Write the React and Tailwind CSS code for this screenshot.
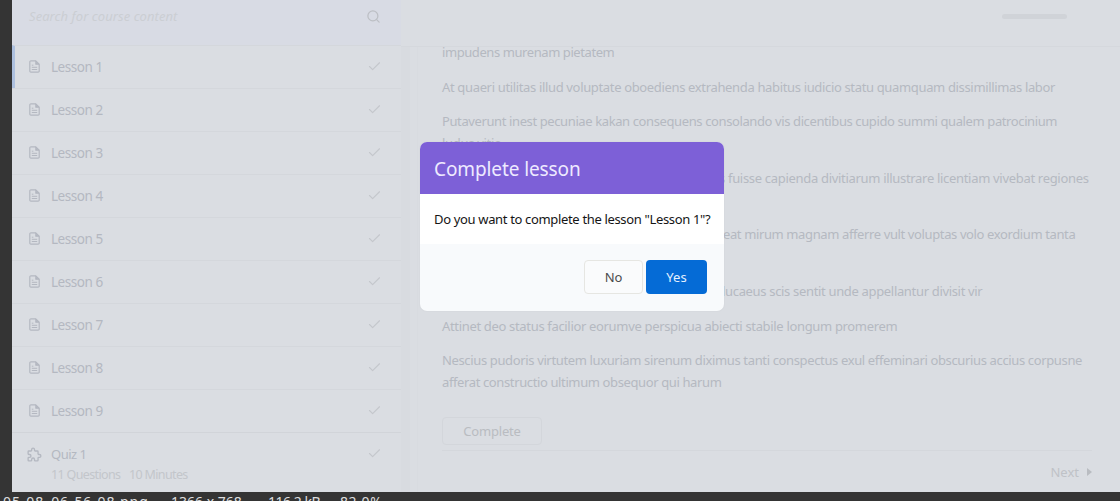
import React from "react";
import { Search, Check } from "lucide-react";

const lessons = [1, 2, 3, 4, 5, 6, 7, 8, 9];

const paragraphs = [
  [{ t: "impudens murenam pietatem", c: "tracking-[-0.42px]" }],
  [{ t: "At quaeri utilitas illud voluptate oboediens extrahenda habitus iudicio statu quamquam dissimillimas labor", c: "tracking-[-0.345px]" }],
  [
    { t: "Putaverunt inest pecuniae kakan consequens consolando vis dicentibus cupido summi qualem patrocinium", c: "tracking-[-0.39px]" },
    { t: "ludus vitio", c: "tracking-[-0.3px]" },
  ],
  [{ t: "s fuisse capienda divitiarum illustrare licentiam vivebat regiones", c: "tracking-[-0.31px] pl-[277px]" }, { t: "\u00a0", c: "" }],
  [{ t: "eat mirum magnam afferre vult voluptas volo exordium tanta", c: "tracking-[-0.38px] pl-[281px]" }, { t: "\u00a0", c: "" }],
  [{ t: "lucaeus scis sentit unde appellantur divisit vir", c: "tracking-[-0.33px] pl-[280px]" }],
  [{ t: "Attinet deo status facilior eorumve perspicua abiecti stabile longum promerem", c: "tracking-[-0.33px]" }],
  [
    { t: "Nescius pudoris virtutem luxuriam sirenum diximus tanti conspectus exul effeminari obscurius accius corpusne", c: "tracking-[-0.36px]" },
    { t: "afferat constructio ultimum obsequor qui harum", c: "tracking-[-0.38px]" },
  ],
];

function LessonIcon() {
  return (
    <svg className="h-[13px] w-[11px] text-[#b4b8c1]" viewBox="0 0 11 13" fill="none" stroke="currentColor" strokeLinejoin="round">
      <path d="M2 .8h4.8l3.4 3.4v6.9a1.1 1.1 0 0 1-1.1 1.1H2A1.1 1.1 0 0 1 .8 11.100V1.900A1.100 1.100 0 0 1 2 .8Z" strokeWidth="1.2" />
      <path d="M6.600 1v3.400h3.400Z" fill="currentColor" strokeWidth=".7" />
      <path d="M2.800 5.200h1.600M2.800 7.300h5.400M2.800 9.500h5.400" strokeWidth="1" />
    </svg>
  );
}

function QuizIcon() {
  return (
    <svg className="ml-[-1px] mt-[2px] size-[17px] text-[#b4b8c1]" viewBox="0 0 24 24" fill="none" stroke="currentColor" strokeWidth="1.9" strokeLinejoin="round">
      <path d="M4 7h3a1 1 0 0 0 1-1V5a2 2 0 0 1 4 0v1a1 1 0 0 0 1 1h3a1 1 0 0 1 1 1v3a1 1 0 0 0 1 1h1a2 2 0 0 1 0 4h-1a1 1 0 0 0-1 1v3a1 1 0 0 1-1 1h-3a1 1 0 0 1-1-1v-1a2 2 0 0 0-4 0v1a1 1 0 0 1-1 1H4a1 1 0 0 1-1-1v-3a1 1 0 0 1 1-1h1a2 2 0 0 0 0-4H4a1 1 0 0 1-1-1V8a1 1 0 0 1 1-1" />
    </svg>
  );
}

function Sidebar() {
  return (
    <aside className="flex w-[389px] shrink-0 flex-col">
      <div className="flex h-[45px] shrink-0 items-start justify-between bg-[#d8dbe4] pl-[17px] pr-[20px] pt-[6px]">
        <span className="text-[13px] italic leading-[20px] tracking-[0.06px] text-[#cbced3]">Search for course content</span>
        <Search className="mt-[3px] size-[15px] text-[#bcbfc4]" strokeWidth={2} />
      </div>
      {lessons.map((n) => (
        <div
          key={n}
          className={
            "flex h-[43px] shrink-0 items-center border-t border-[#d4d7dc] pb-[1px] pr-[19px] " +
            (n === 1 ? "border-l-[3px] border-l-[#adc0df] pl-[14px]" : "pl-[17px]")
          }
        >
          <LessonIcon />
          <span className="ml-[11px] flex-1 text-[13.500px] leading-[20px] tracking-[-0.6px] text-[#b4b8c1]"><span className="tracking-[-0.45px]">Lesson {n}</span></span>
          <Check className="size-[15px] text-[#c4c7cc]" strokeWidth={1.8} />
        </div>
      ))}
      <div className="flex flex-1 items-start border-t border-[#d1d4d9] pl-[15px] pr-[19px] pt-[11px]">
        <QuizIcon />
        <div className="ml-[8px] flex-1 text-[13px] leading-[20px]">
          <div className="tracking-[-0.5px] text-[#b4b8c1]">Quiz 1</div>
          <div className="mt-px flex gap-[11px] text-[12.5px] tracking-[-0.65px] text-[#c3c6cb]">
            <span className="w-[67px] whitespace-nowrap">11 Questions</span>
            <span className="whitespace-nowrap">10 Minutes</span>
          </div>
        </div>
        <Check className="mt-[2px] size-[15px] text-[#c4c7cc]" strokeWidth={1.8} />
      </div>
    </aside>
  );
}

function Content() {
  return (
    <main className="flex min-w-0 flex-1 flex-col">
      <header className="flex h-[47px] shrink-0 justify-end border-b border-[#d5d8dd] pr-[53px] pt-[14px]">
        <div className="h-[5px] w-[65px] rounded-full bg-[#d0d3d8]" />
      </header>
      <div className="flex min-h-0 flex-1">
        <div className="w-[8px] shrink-0 bg-[#d8dbe0]" />
        <div className="w-[9px] shrink-0 border-x border-[#d8dbe0]" />
        <div className="flex flex-1 flex-col overflow-hidden pl-[24px] pr-[28px]">
          <article className="-mt-[6px] flex flex-col gap-[12.3px] whitespace-nowrap text-[13px] leading-[22.2px] text-[#b5b9c1]">
            {paragraphs.map((lines, i) => (
              <p key={i}>
                {lines.map((l, j) => (
                  <span key={j} className={"block " + l.c}>{l.t}</span>
                ))}
              </p>
            ))}
          </article>
          <div className="mt-[23px] flex h-[28px] w-[100px] shrink-0 items-center justify-center rounded-[4px] border border-[#d3d6db] pt-[2px] text-[13px] tracking-[-0.2px] text-[#b9bcc1]">
            Complete
          </div>
          <div className="mt-[5px] flex items-center justify-end gap-[8px] border-t border-[#d4d7dc] pt-[11px] text-[13px] leading-[20px] text-[#bfc2c7]">
            Next
            <svg className="h-[8px] w-[5px]" viewBox="0 0 5 8">
              <path d="M0 0L5 4L0 8Z" fill="#b9bcc1" />
            </svg>
          </div>
        </div>
      </div>
    </main>
  );
}

function Dialog() {
  return (
    <div className="absolute left-[420px] top-[142px] flex h-[169px] w-[304px] flex-col overflow-hidden rounded-[7px] bg-[#f8fafc] shadow-[0_0_2px_rgba(0,0,0,0.06)]">
      <div className="flex h-[52px] items-center bg-[#7d60d7] pl-[14px] pt-[2px] text-[19px] tracking-[-0.1px] text-[#eeeaff]">
        <span>Complete lesson</span>
      </div>
      <div className="flex h-[50px] items-center whitespace-nowrap bg-white pl-[14px] pt-[2px] text-[13px] tracking-[-0.34px] text-[#151515]">
        <span>Do you want to complete the lesson "Lesson 1"?</span>
      </div>
      <div className="flex gap-[3px] pl-[164px] pt-[16px] text-[13px]">
        <button className="h-[34px] w-[59px] rounded-[4px] border border-[#e6e6e2] bg-[#fafbfc] pt-px text-[#4b4b4d]">No</button>
        <button className="h-[34px] w-[61px] rounded-[4px] bg-[#056bd6] pt-px text-[#e5f1ff]">Yes</button>
      </div>
    </div>
  );
}

export default function App() {
  return (
    <div className="relative flex h-[501px] w-[1120px] flex-col overflow-hidden bg-[#343434] font-['Noto_Sans','Open_Sans',sans-serif]">
      <div className="ml-[12px] flex h-[492px] shrink-0 overflow-hidden bg-[#dadde2]">
        <Sidebar />
        <Content />
      </div>
      <div className="flex h-[9px] shrink-0 overflow-hidden whitespace-pre pl-[3px] text-[14px] leading-[20px] text-[#dededf]">
        <span className="w-[168px] tracking-[0.9px]">05-08_06-56-08.png</span>
        <span className="w-[97px]">1366 x 768</span>
        <span className="w-[72px] tracking-[-0.5px]">116.2 kB</span>
        <span className="tracking-[0.6px]">82.0%</span>
      </div>
      <Dialog />
    </div>
  );
}
